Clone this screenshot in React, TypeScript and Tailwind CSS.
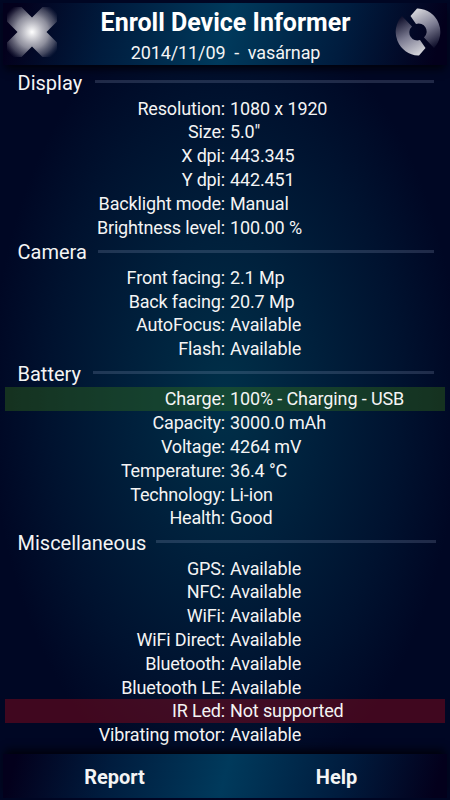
import React from "react";

type Row = {
  label: string;
  value: string;
  tone?: "good" | "bad";
};

type Section = {
  title: string;
  rows: Row[];
  titleClass: string;
  lineClass: string;
};

const SECTIONS: Section[] = [
  {
    title: "Display",
    titleClass: "w-[77px]",
    lineClass: "mr-4",
    rows: [
      { label: "Resolution", value: "1080 x 1920" },
      { label: "Size", value: '5.0"' },
      { label: "X dpi", value: "443.345" },
      { label: "Y dpi", value: "442.451" },
      { label: "Backlight mode", value: "Manual" },
      { label: "Brightness level", value: "100.00 %" },
    ],
  },
  {
    title: "Camera",
    titleClass: "w-[80px]",
    lineClass: "mr-4",
    rows: [
      { label: "Front facing", value: "2.1 Mp" },
      { label: "Back facing", value: "20.7 Mp" },
      { label: "AutoFocus", value: "Available" },
      { label: "Flash", value: "Available" },
    ],
  },
  {
    title: "Battery",
    titleClass: "w-[75px]",
    lineClass: "mr-4",
    rows: [
      { label: "Charge", value: "100% - Charging - USB", tone: "good" },
      { label: "Capacity", value: "3000.0 mAh" },
      { label: "Voltage", value: "4264 mV" },
      { label: "Temperature", value: "36.4 °C" },
      { label: "Technology", value: "Li-ion" },
      { label: "Health", value: "Good" },
    ],
  },
  {
    title: "Miscellaneous",
    titleClass: "w-[138px]",
    lineClass: "mr-3.5",
    rows: [
      { label: "GPS", value: "Available" },
      { label: "NFC", value: "Available" },
      { label: "WiFi", value: "Available" },
      { label: "WiFi Direct", value: "Available" },
      { label: "Bluetooth", value: "Available" },
      { label: "Bluetooth LE", value: "Available" },
      { label: "IR Led", value: "Not supported", tone: "bad" },
      { label: "Vibrating motor", value: "Available" },
    ],
  },
];

const TONES = {
  good: "bg-[#367416]/38",
  bad: "bg-[#80081a]/50",
};

function CloseIcon() {
  return (
    <svg width="50" height="50" viewBox="-25 -25 50 50" className="block">
      <defs>
        <radialGradient id="cross" gradientUnits="userSpaceOnUse" cx="0" cy="0" r="33">
          <stop offset="0" stopColor="#fff" />
          <stop offset="0.2" stopColor="#d0d0d6" />
          <stop offset="0.5" stopColor="#a0a0ac" stopOpacity="0.88" />
          <stop offset="0.75" stopColor="#808090" stopOpacity="0.5" />
          <stop offset="0.95" stopColor="#606078" stopOpacity="0" />
        </radialGradient>
      </defs>
      <path
        d="M0 -14.5 L10.5 -25 H25 V-10.5 L14.5 0 L25 10.5 V25 H10.5 L0 14.5 L-10.5 25 H-25 V10.5 L-14.5 0 L-25 -10.5 V-25 H-10.5 Z"
        fill="url(#cross)"
      />
    </svg>
  );
}

function RefreshIcon() {
  return (
    <svg width="48" height="48" viewBox="-24 -24 48 48" className="block">
      <defs>
        <linearGradient id="arcRight" gradientUnits="userSpaceOnUse" x1="-4" y1="-20" x2="16" y2="15">
          <stop offset="0" stopColor="#d2d2d8" />
          <stop offset="0.5" stopColor="#7c7c92" />
          <stop offset="1" stopColor="#10102c" />
        </linearGradient>
        <linearGradient id="arcLeft" gradientUnits="userSpaceOnUse" x1="4" y1="20" x2="-16" y2="-15">
          <stop offset="0" stopColor="#d2d2d8" />
          <stop offset="0.5" stopColor="#7c7c92" />
          <stop offset="1" stopColor="#10102c" />
        </linearGradient>
      </defs>
      <path d="M0 -23.5 A23.5 23.5 0 0 1 16 16 L6 5.5 A8 8 0 0 0 -2 -8 L-7.5 -16 L-1 -23.5 Z" fill="url(#arcRight)" />
      <path d="M0 23.5 A23.5 23.5 0 0 1 -16 -16 L-6 -5.5 A8 8 0 0 0 2 8 L7.5 16 L1 23.5 Z" fill="url(#arcLeft)" />
    </svg>
  );
}

function InfoRow({ label, value, tone }: Row) {
  return (
    <div
      className={`mx-[5px] flex h-[23.8px] items-center text-[18px] leading-none whitespace-pre ${tone ? TONES[tone] : ""}`}
    >
      <span className="w-[220px] pt-px text-right tracking-[-0.16px]">{label}:</span>
      <span className="pt-px pl-[5px] tracking-[-0.13px]">{value}</span>
    </div>
  );
}

export default function App() {
  return (
    <div className="flex h-[800px] w-[450px] flex-col overflow-hidden bg-[#000724] bg-[radial-gradient(ellipse_235px_400px_at_50%_50%,#003049_0%,#00203c_40%,#00122f_75%,#000724_100%)] font-['Roboto','Liberation_Sans',sans-serif] text-[#f4f4f4]">
      {/* Title bar */}
      <header className="mx-[3px] mt-[3px] flex h-[62px] shrink-0 bg-[linear-gradient(105deg,#03001c_3%,#001c3e_24%,#003a5c_50%,#001c3e_76%,#03001c_97%)] px-1 shadow-[0_6px_8px_-2px_#00020c]">
        <div className="pt-1">
          <CloseIcon />
        </div>
        <div className="flex flex-1 flex-col items-center whitespace-pre">
          <h1 className="mt-[7px] text-[25px] leading-[26px] font-bold text-white">Enroll Device Informer</h1>
          <p className="mt-1.5 text-[18px] leading-[22px] tracking-[-0.1px]">2014/11/09  -  vasárnap</p>
        </div>
        <div className="mr-px pt-[5px]">
          <RefreshIcon />
        </div>
      </header>

      {/* Device details */}
      <main className="flex-1 pt-[4.7px]">
        {SECTIONS.map((section) => (
          <section key={section.title}>
            <div className="flex h-[26.45px] items-center pl-[17.5px]">
              <h2 className={`shrink-0 text-[20px] leading-none ${section.titleClass}`}>{section.title}</h2>
              <div className={`mb-[2px] h-[3px] flex-1 bg-[#a0b0d0]/20 ${section.lineClass}`} />
            </div>
            {section.rows.map((row) => (
              <InfoRow key={row.label} {...row} />
            ))}
          </section>
        ))}
      </main>

      {/* Bottom actions */}
      <footer className="mx-[3px] mb-[2px] grid h-11 shrink-0 grid-cols-2 bg-[linear-gradient(105deg,#03001c_3%,#001c3e_24%,#003a5c_50%,#001c3e_76%,#03001c_97%)] pt-px text-[20px] font-bold shadow-[0_-6px_8px_-2px_#00020c]">
        <button className="pl-px">Report</button>
        <button className="pl-px">Help</button>
      </footer>
    </div>
  );
}
